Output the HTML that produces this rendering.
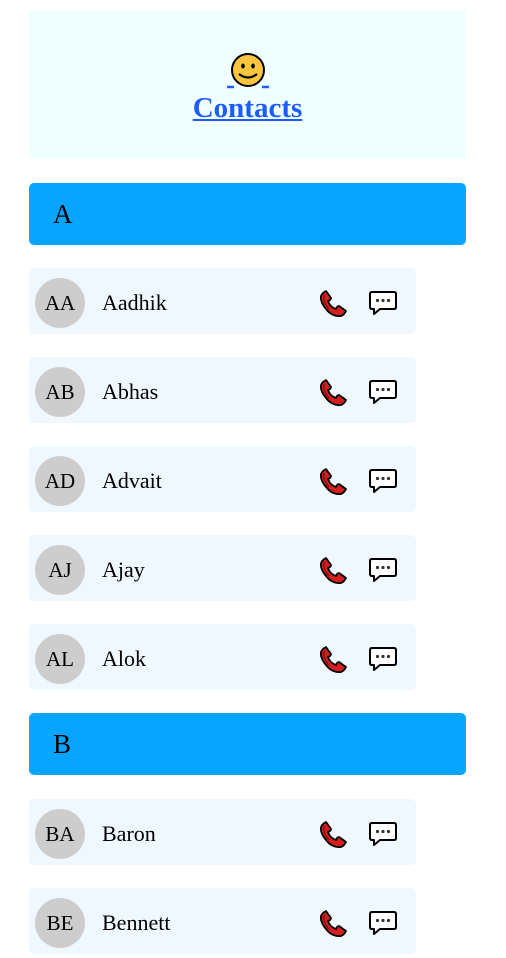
<!DOCTYPE html>
<html><head><style>
body{margin:0;background:#fff;font-family:"Liberation Serif",serif;width:506px;height:951px;overflow:hidden;position:relative}
.hdr{position:absolute;left:29px;top:10px;width:437px;height:149px;background:#f0ffff;border-radius:4px}
.hdr a{position:absolute;left:0;right:0;top:41px;text-align:center;color:#1f5cff;font-weight:bold;font-size:29px;line-height:34px;text-decoration:underline}
.sec{position:absolute;left:29px;width:437px;height:62px;background:#08a5ff;border-radius:5px;font-size:27px;line-height:62px;text-indent:24px;color:#000}
.row{position:absolute;left:29px;width:387px;height:66px;background:#eff7ff;border-radius:5px}
.av{position:absolute;left:6px;top:10px;width:50px;height:50px;border-radius:50%;background:#cdcdcd;text-align:center;line-height:50px;font-size:21px}
.nm{position:absolute;left:73px;top:0;line-height:70px;font-size:22px}
.ph{position:absolute;left:290px;top:22px}
.ms{position:absolute;left:340px;top:23px}
</style></head><body>
<div class="hdr"><a>
<svg width="42" height="40" viewBox="0 0 42 40" style="display:block;margin:0 auto"><line x1="0" y1="36" x2="7" y2="36" stroke="#1f5cff" stroke-width="2.5"/><line x1="35" y1="36" x2="42" y2="36" stroke="#1f5cff" stroke-width="2.5"/><circle cx="21" cy="19" r="16" fill="#fcc53f" stroke="#000" stroke-width="2"/><ellipse cx="16" cy="15" rx="1.8" ry="2.5" fill="#000"/><ellipse cx="26" cy="15" rx="1.8" ry="2.5" fill="#000"/><path d="M12 23 Q21 30 30 23" fill="none" stroke="#000" stroke-width="2.2"/></svg>
Contacts</a></div>

<div class="sec" style="top:183px">A</div>
<div class="sec" style="top:713px">B</div>

<script>
var c=[["AA","Aadhik",268],["AB","Abhas",357],["AD","Advait",446],["AJ","Ajay",535],["AL","Alok",624],["BA","Baron",799],["BE","Bennett",888]];
var ph='<svg class="ph" width="28" height="28" viewBox="0 0 28 28"><path d="M2 6 Q3 3 7 1 L12 8 Q12 10 9 11 Q11 17 17 19 Q18 16 20 16 L27 21 Q25 25 22 26 Q13 27 7 19 Q1 12 2 6Z" fill="#d41f1f" stroke="#000" stroke-width="1.8" stroke-linejoin="round"/><path d="M5 5 Q4 13 10 19" fill="none" stroke="#8a0c0c" stroke-width="1.5"/></svg>';
var ms='<svg class="ms" width="28" height="25" viewBox="0 0 28 25"><path d="M3 1 H25 Q27 1 27 3 V16 Q27 18 25 18 H11 L5 23 V18 H3 Q1 18 1 16 V3 Q1 1 3 1Z" fill="#fff" stroke="#000" stroke-width="2" stroke-linejoin="round"/><circle cx="8.5" cy="9.5" r="1.6" fill="#333"/><circle cx="14" cy="9.5" r="1.6" fill="#333"/><circle cx="19.5" cy="9.5" r="1.6" fill="#333"/></svg>';
c.forEach(function(x){document.write('<div class="row" style="top:'+x[2]+'px"><div class="av">'+x[0]+'</div><div class="nm">'+x[1]+'</div>'+ph+ms+'</div>');});
</script>
</body></html>
